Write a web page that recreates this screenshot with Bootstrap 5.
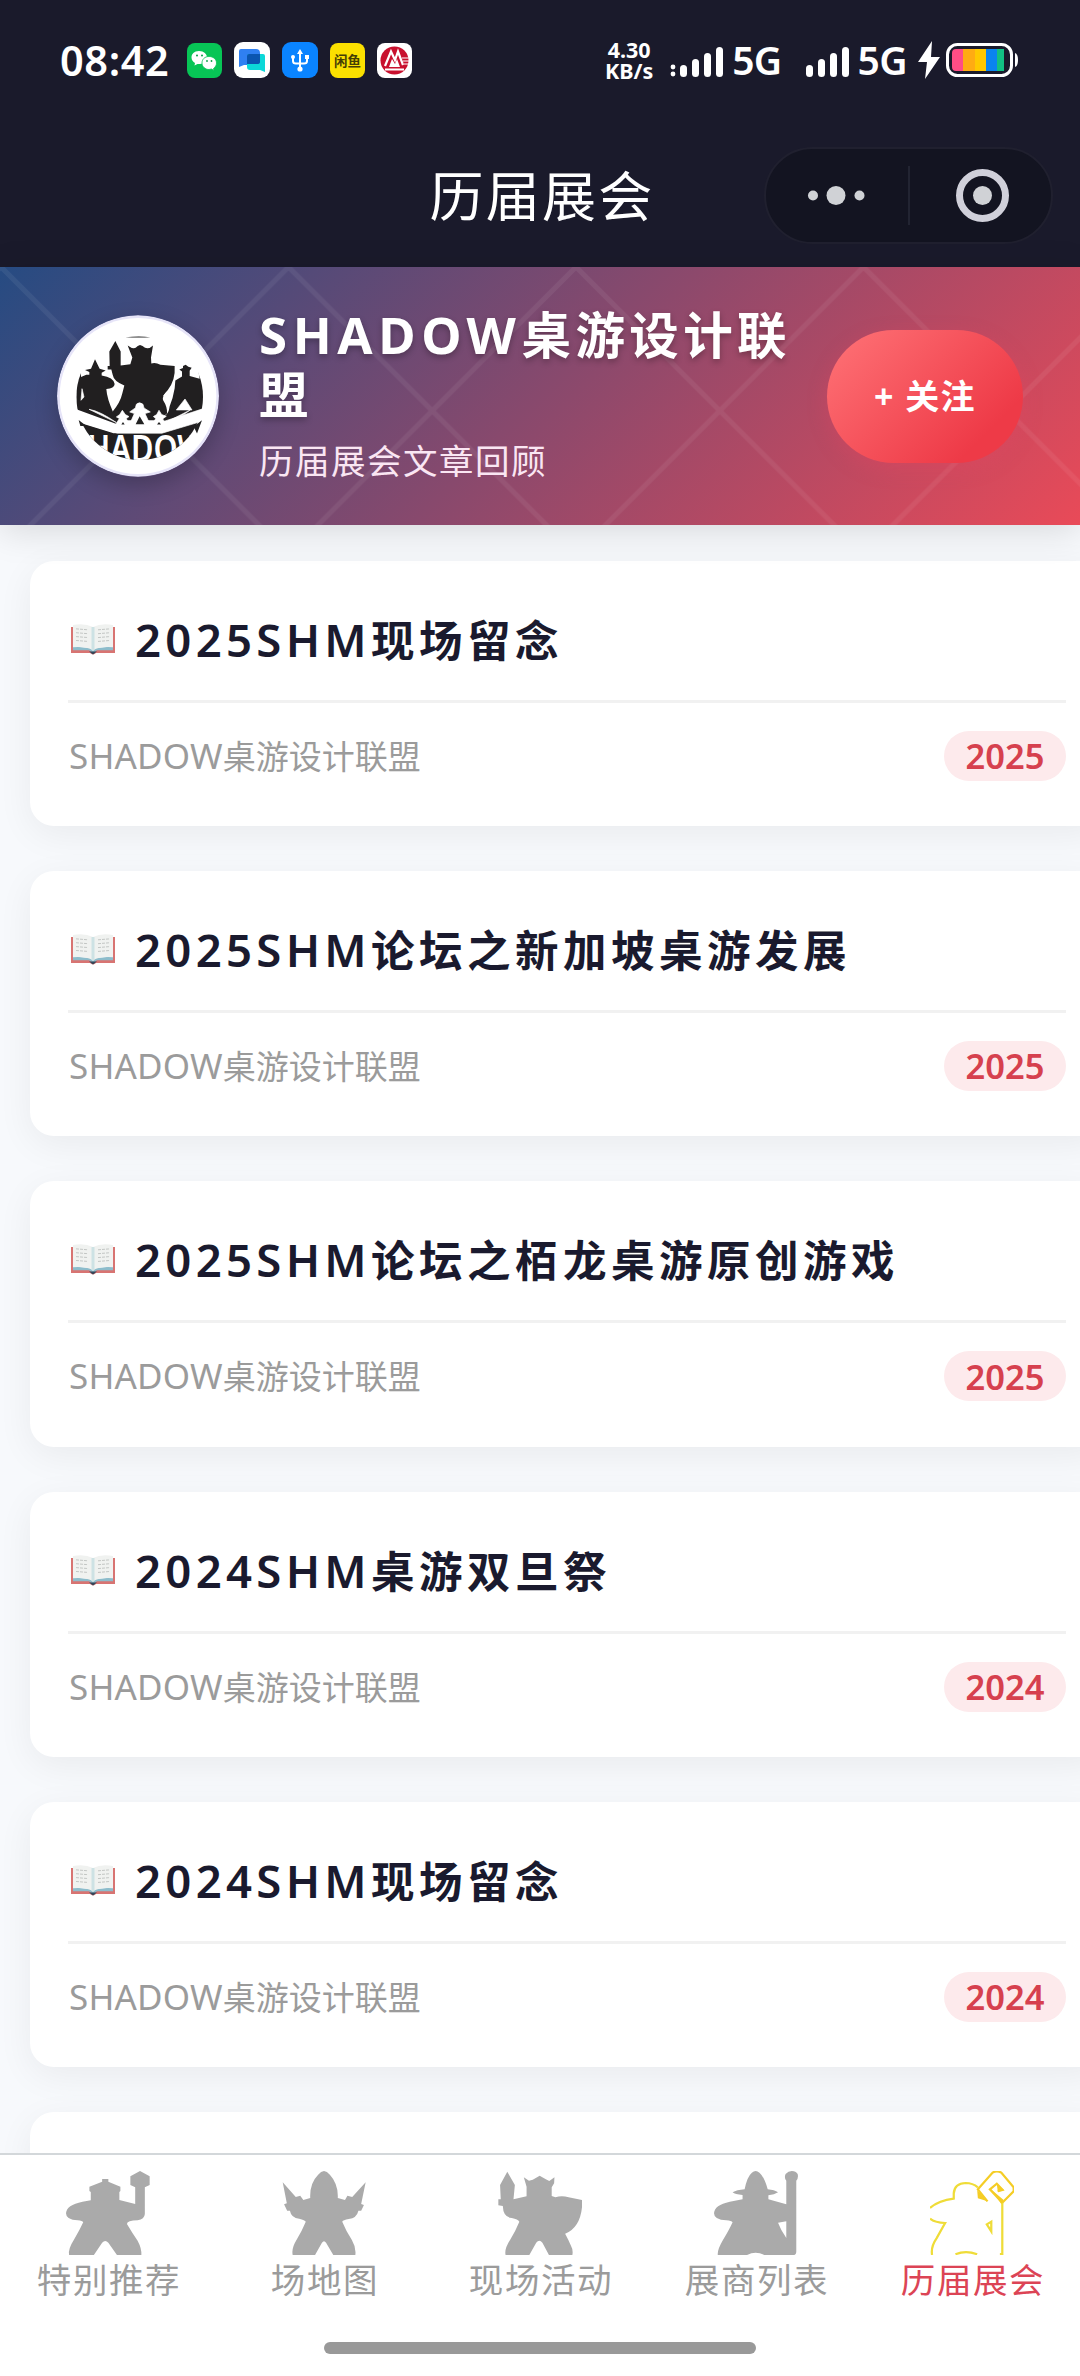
<!DOCTYPE html>
<html lang="zh-CN">
<head>
  <meta charset="UTF-8">
  <meta name="viewport" content="width=device-width, initial-scale=1">
  <title>历届展会</title>
  <link href="https://cdn.jsdelivr.net/npm/bootstrap@5.3.0/dist/css/bootstrap.min.css" rel="stylesheet">
  <style>
    body {
      width: 1080px;
      height: 2376px;
      margin: 0;
      overflow: hidden;
      background-color: #f7f9fc;
      font-family: "Noto Sans", "Noto Sans CJK SC", sans-serif;
      line-height: 1.2;
    }
    svg {
      display: block;
      flex: none;
    }

    /* status bar + title */
    .top-bar {
      height: 267px;
      background-color: #1a1a2b;
      color: #fff;
    }
    .status-bar {
      height: 120px;
      padding: 0 61px 0 60px;
    }
    .clock {
      width: 127px;
      font-size: 41.5px;
      font-weight: 600;
      letter-spacing: .6px;
      line-height: 50px;
    }
    .app-icons {
      gap: 12px;
    }
    .net-speed {
      width: 50px;
      font-size: 21.5px;
      font-weight: 700;
      line-height: 21px;
    }
    .net-type {
      font-size: 39px;
      font-weight: 600;
      line-height: 50px;
      letter-spacing: -.6px;
    }
    .title-bar {
      height: 147px;
      padding: 27px 27px 0;
      display: grid;
      grid-template-columns: 1fr 230px 1fr;
    }
    .title-bar h1 {
      margin: 0;
      padding: 4px 0 0 4px;
      font-size: 54px;
      font-weight: 400;
      line-height: 90px;
      letter-spacing: 2.2px;
      white-space: nowrap;
    }
    .capsule {
      width: 289px;
      height: 97px;
      border: 2px solid #20202f;
      border-radius: 49px;
      background-color: #131421;
    }

    /* account banner */
    .banner {
      height: 258px;
      padding: 0 57px;
      color: #fff;
      position: relative;
      z-index: 1;
      background: linear-gradient(135deg, #264b82 0%, #88496d 50%, #e94a58 100%);
      box-shadow: 0 6px 34px rgba(0, 0, 0, .13);
    }
    .banner-lines {
      position: absolute;
      inset: 0;
    }
    .avatar {
      border-radius: 50%;
      box-shadow: 0 8px 22px rgba(0, 0, 0, .22);
      position: relative;
    }
    .account {
      width: 605px;
      padding: 8px 0 0 40px;
      flex: none;
      position: relative;
    }
    .account h2 {
      margin: 0;
      font-size: 49.5px;
      font-weight: 700;
      line-height: 60px;
      letter-spacing: 4.4px;
      text-shadow: 0 3px 6px rgba(0, 0, 0, .28);
    }
    .account h2 span {
      font-size: 51px;
      letter-spacing: 5.6px;
    }
    .account p {
      margin: 0;
      font-size: 34.5px;
      line-height: 72px;
      letter-spacing: 1.5px;
      color: #fae6f3;
    }
    .btn-follow {
      width: 196px;
      height: 133px;
      margin-left: 3px;
      border-radius: 67px;
      background: linear-gradient(135deg, #ff7377 0%, #ee3a47 80%);
      box-shadow: 0 6px 20px rgba(233, 69, 96, .3);
      color: #fff;
      font-size: 34px;
      font-weight: 700;
      letter-spacing: 1.4px;
      position: relative;
    }

    /* articles */
    .articles {
      padding: 35.5px 0 0 29.5px;
      gap: 45px;
    }
    .article {
      width: 1075px;
      height: 265.4px;
      flex: none;
      padding: 0 38.5px;
      border-radius: 24px;
      background-color: #fff;
      box-shadow: 0 9px 36px rgba(0, 0, 0, .06);
    }
    .article-title {
      height: 142px;
      padding: 18px 0 0 3px;
      border-bottom: 3px solid #f1f1f1;
      color: #1a1a2e;
    }
    .article-title h3 {
      margin: 0 0 0 20px;
      font-size: 43.5px;
      font-weight: 700;
      letter-spacing: 4.5px;
      white-space: nowrap;
    }
    .article-title h3 span {
      font-size: 45.5px;
      font-weight: 650;
      letter-spacing: 4.3px;
    }
    .article-meta {
      height: 106px;
      padding-left: 1px;
      color: #9b9b9b;
      font-size: 33px;
    }
    .latin {
      font-size: 35px;
      letter-spacing: .2px;
    }
    .year {
      width: 122px;
      height: 50px;
      border-radius: 25px;
      background-color: #fdeaec;
      color: #d6404e;
      font-size: 34.5px;
      font-weight: 600;
    }

    /* tab bar */
    .tab-bar {
      height: 223px;
      border-top: 2px solid #d3d7da;
      background-color: #fff;
      color: #9b9b9b;
    }
    .tab-item {
      padding-top: 16px;
      font-size: 34.5px;
      letter-spacing: 1.6px;
      line-height: 48px;
      fill: #aaa;
    }
    .tab-item svg {
      margin-bottom: 1px;
    }
    .tab-item div {
      padding-left: 2px;
    }
    .tab-item.active {
      color: #dc4455;
    }
    .home-line {
      width: 432px;
      height: 12px;
      margin-top: 38px;
      border-radius: 6px;
      background-color: #999;
    }
  </style>
</head>
<body class="d-flex flex-column">

  <svg width="0" height="0" class="position-absolute">
    <symbol id="book" viewBox="0 0 44 32" preserveAspectRatio="none">
      <path d="M0 3H2V25H18L22 28L26 25H42V3H44V30H25Q22 33 19 30H0Z" fill="#d87472"/>
      <path d="M2 23L20 25L22 28L24 25L42 23V27H26L22 30L18 27H2Z" fill="#8dbccb"/>
      <path d="M18 28.500H26L22 31.500Z" fill="#33475a"/>
      <path d="M2 1Q14 -1 22 3Q30 -1 42 1V24Q29 23 22 27Q15 23 2 24Z" fill="#f0f2f0"/>
      <path d="M20.500 3H23.500V26L22 27L20.500 26Z" fill="#cde2e4"/>
      <path d="M5 5L17 6M5 9L17 10M5 13L17 14M5 17L17 18M27 6L39 5M27 10L39 9M27 14L39 13M27 18L39 17" stroke="#c2c5c3" stroke-width="1" stroke-dasharray="3 1"/>
    </symbol>
  </svg>

  <div class="top-bar">
    <div class="status-bar d-flex align-items-center justify-content-between">
      <div class="d-flex align-items-center">
        <div class="clock">08:42</div>
        <div class="app-icons d-flex align-items-center">
          <svg width="35" height="35" viewBox="0 0 35 35">
            <rect width="35" height="35" rx="8" fill="#07c556"/>
            <path d="M12 8C7 8 4.500 11 4.500 14.500C4.500 17 6 19 8 20L7.500 22.500L10.500 21H13C18 21 20 18 20 14.500C20 11 17 8 12 8Z" fill="#fff"/>
            <path d="M22 13.500C17.500 13.500 15 16.500 15 20C15 23.500 18 26.500 22 26.500L24.500 26L27 27.500L26.500 25.500C28.500 24 29.500 22 29.500 20C29.500 16.500 26.500 13.500 22 13.500Z" fill="#fff" stroke="#07c556" stroke-width=".8"/>
            <g fill="#07a045"><circle cx="10" cy="12.500" r="1"/><circle cx="15" cy="12.500" r="1"/><circle cx="20" cy="18" r=".9"/><circle cx="24.500" cy="18" r=".9"/></g>
          </svg>
          <svg width="36" height="36" viewBox="0 0 36 36">
            <rect width="36" height="36" rx="9" fill="#fff"/>
            <path d="M7 7H22Q26 7 26 11V23H10L5 25V9Q5 7 7 7Z" fill="#2f80f2"/>
            <path d="M15 12H29Q31 12 31 14V30L26 28H16Q13 28 13 25V15Q13 12 15 12Z" fill="#0cd8d8"/>
            <path d="M15 12H26V20Q26 22 23 22H13V14Q13 12 15 12Z" fill="#0a55b0"/>
          </svg>
          <svg width="36" height="36" viewBox="0 0 36 36">
            <rect width="36" height="36" rx="9" fill="#0a84ff"/>
            <path d="M18 11V28M11 15V19Q11 21.500 14 21.500H22Q25 21.500 25 19V15" fill="none" stroke="#fff" stroke-width="2"/>
            <path d="M18 7L21 12H15Z" fill="#fff"/>
            <circle cx="18" cy="27" r="2.600" fill="#fff"/><circle cx="11" cy="15" r="2" fill="#fff"/><rect x="23" y="13" width="4" height="4" fill="#fff"/>
          </svg>
          <svg width="35" height="35" viewBox="0 0 35 35">
            <rect width="35" height="35" rx="8" fill="#fbe000"/>
            <text x="17.500" y="22.500" font-size="13.500" font-weight="700" text-anchor="middle" fill="#453d05">闲鱼</text>
          </svg>
          <svg width="35" height="35" viewBox="0 0 35 35">
            <rect width="35" height="35" rx="8" fill="#fff"/>
            <circle cx="17.500" cy="17.500" r="14" fill="#c8102e"/>
            <path d="M8 23L14 8.500L18 17L21 8.500L26 22M8 26.500H27" fill="none" stroke="#fff" stroke-width="2.200"/>
            <path d="M12 24L15 16L18 21L20 16L23 24Z" fill="#fff"/>
            <path d="M25 15H33M26 18H33M27 21H33" stroke="#fff" stroke-width="1.200"/>
          </svg>
        </div>
      </div>
      <div class="d-flex align-items-center">
        <div class="net-speed text-center">4.30<br>KB/s</div>
        <svg width="54" height="36" viewBox="0 0 54 36" class="ms-3" fill="#fff">
          <circle cx="3" cy="25" r="2.400"/><circle cx="3" cy="32" r="2.400"/>
          <rect x="10" y="23" width="7" height="12" rx="3.500"/><rect x="22" y="17" width="7" height="18" rx="3.500"/><rect x="34" y="11" width="7" height="24" rx="3.500"/><rect x="46" y="5" width="7" height="30" rx="3.500"/>
        </svg>
        <div class="net-type ms-2 me-4">5G</div>
        <svg width="44" height="36" viewBox="0 0 44 36" fill="#fff">
          <rect x="0" y="23" width="7" height="12" rx="3.500"/><rect x="12" y="17" width="7" height="18" rx="3.500"/><rect x="24" y="11" width="7" height="24" rx="3.500"/><rect x="36" y="5" width="7" height="30" rx="3.500"/>
        </svg>
        <div class="net-type ms-2">5G</div>
        <svg width="104" height="38" viewBox="0 0 104 38" class="ms-2">
          <path d="M17 0L3 21H12L10 38L25 16H16Z" fill="#fff"/>
          <rect x="32.500" y="3.500" width="64" height="31" rx="10" fill="#1a1a2b" stroke="#fff" stroke-width="3"/>
          <path d="M41 8H48V30H41Q37 30 37 26V12Q37 8 41 8Z" fill="#ff4d85"/>
          <rect x="48" y="8" width="12" height="22" fill="#ffab12"/>
          <rect x="60" y="8" width="11" height="22" fill="#ffc800"/>
          <rect x="71" y="8" width="11" height="22" fill="#0a84f0"/>
          <rect x="82" y="8" width="7" height="22" fill="#12c083"/>
          <path d="M100 12Q103 13 103 19Q103 25 100 26Z" fill="#fff"/>
        </svg>
      </div>
    </div>
    <div class="title-bar">
      <div></div>
      <h1 class="text-center">历届展会</h1>
      <div class="d-flex justify-content-end">
        <svg class="capsule" viewBox="0 0 285 93">
          <g fill="#d0d2d6"><circle cx="47" cy="46.500" r="5"/><circle cx="70" cy="46.500" r="9.500"/><circle cx="93.500" cy="46.500" r="5"/><circle cx="216.500" cy="46.500" r="9.500"/></g>
          <path d="M143 17V76" stroke="#292a38" stroke-width="1.500"/>
          <circle cx="216.500" cy="46.500" r="23" fill="none" stroke="#d0d0da" stroke-width="7"/>
        </svg>
      </div>
    </div>
  </div>

  <div class="banner d-flex align-items-center flex-shrink-0">
    <svg class="banner-lines" width="1080" height="258">
      <defs>
        <pattern id="cross" x="1" y="0" width="287.500" height="287.500" patternUnits="userSpaceOnUse">
          <path d="M0 0L287.500 287.500M287.500 0L0 287.500" stroke="#fff" stroke-opacity=".06" stroke-width="5"/>
        </pattern>
      </defs>
      <rect width="1080" height="258" fill="url(#cross)"/>
    </svg>
    <svg class="avatar" width="162" height="162" viewBox="20 28 486 488" preserveAspectRatio="none">
      <defs>
        <clipPath id="disc"><circle cx="268" cy="275" r="190"/></clipPath>
      </defs>
      <circle cx="263" cy="272" r="243" fill="#e6e4f8"/>
      <circle cx="263" cy="272" r="235" fill="#fff"/>
      <path d="M225 95Q268 90 300 95Q268 97 225 95Z" fill="#222"/>
      <g clip-path="url(#disc)" fill="#211f20">
        <path d="M78 205L92 195V215L108 208H117V200L104 194L122 190L134 161L148 190L166 195L154 202V210Q190 215 193 236Q192 249 168 251Q170 280 188 320L215 335V362L78 312Z"/>
        <path d="M183 192H172V182H178L177 138L195 106L211 138V180L240 176L246 156L232 120Q248 132 256 127Q262 120 269 118Q277 120 284 127Q296 132 308 120L302 156L303 174Q316 170 330 178L373 182Q376 225 352 255Q335 272 338 284Q352 306 350 325L325 345H210L186 320Q210 292 216 264L222 240Q190 228 187 208Z"/>
        <path d="M375 225L395 213V198L387 192L398 188V182L406 178L414 184L424 187L418 196V212L448 220L444 196L462 208V310L320 360L345 330Q355 325 358 303Q368 280 373 249Z"/>
        <path d="M75 344L100 356L190 384L268 378L370 370L465 342V475H75Z"/>
      </g>
      <g fill="#fff" stroke="#fff" stroke-width="2">
        <path d="M95 250L101 275L92 285ZM362 253L340 270Q350 293 352 306ZM404 281L378 314H425ZM182 252L192 294L203 268Z"/>
        <path d="M78 317L210 367L268 372L462 309V346L335 384H200L78 347Z"/>
        <path d="M232 370L252 325L238 320L255 308L258 297Q267 288 278 297L281 308L300 320L284 325L306 372Z"/>
        <path d="M193 362L207 340L198 335L208 328L216 315L225 328L236 334L228 340L240 365ZM302 365L316 340L309 334L319 328L326 315L334 328L348 333L337 341L352 362Z"/>
        <path d="M116 312Q150 318 198 352ZM420 314L345 352L400 328Z"/>
      </g>
      <path d="M256 357L268 333L282 357ZM213 358L218 350L223 358ZM320 358L326 350L332 358Z" fill="#222"/>
      <path d="M85 344L108 362H90ZM455 345L430 364L440 385Z" fill="#222"/>
      <text x="264" y="470" font-size="116" font-weight="600" text-anchor="middle" textLength="410" lengthAdjust="spacingAndGlyphs" fill="#fff" clip-path="url(#disc)">SHADOW</text>
    </svg>
    <div class="account">
      <h2><span>SHADOW</span>桌游设计联盟</h2>
      <p>历届展会文章回顾</p>
    </div>
    <button class="btn-follow border-0 p-0">+ 关注</button>
  </div>

  <div class="articles d-flex flex-column flex-grow-1 overflow-hidden">
    <div class="article">
      <div class="article-title d-flex align-items-center">
        <svg width="44" height="31"><use href="#book"/></svg>
        <h3><span>2025SHM</span>现场留念</h3>
      </div>
      <div class="article-meta d-flex align-items-center justify-content-between">
        <div><span class="latin">SHADOW</span>桌游设计联盟</div>
        <div class="year d-flex align-items-center justify-content-center">2025</div>
      </div>
    </div>
    <div class="article">
      <div class="article-title d-flex align-items-center">
        <svg width="44" height="31"><use href="#book"/></svg>
        <h3><span>2025SHM</span>论坛之新加坡桌游发展</h3>
      </div>
      <div class="article-meta d-flex align-items-center justify-content-between">
        <div><span class="latin">SHADOW</span>桌游设计联盟</div>
        <div class="year d-flex align-items-center justify-content-center">2025</div>
      </div>
    </div>
    <div class="article">
      <div class="article-title d-flex align-items-center">
        <svg width="44" height="31"><use href="#book"/></svg>
        <h3><span>2025SHM</span>论坛之栢龙桌游原创游戏</h3>
      </div>
      <div class="article-meta d-flex align-items-center justify-content-between">
        <div><span class="latin">SHADOW</span>桌游设计联盟</div>
        <div class="year d-flex align-items-center justify-content-center">2025</div>
      </div>
    </div>
    <div class="article">
      <div class="article-title d-flex align-items-center">
        <svg width="44" height="31"><use href="#book"/></svg>
        <h3><span>2024SHM</span>桌游双旦祭</h3>
      </div>
      <div class="article-meta d-flex align-items-center justify-content-between">
        <div><span class="latin">SHADOW</span>桌游设计联盟</div>
        <div class="year d-flex align-items-center justify-content-center">2024</div>
      </div>
    </div>
    <div class="article">
      <div class="article-title d-flex align-items-center">
        <svg width="44" height="31"><use href="#book"/></svg>
        <h3><span>2024SHM</span>现场留念</h3>
      </div>
      <div class="article-meta d-flex align-items-center justify-content-between">
        <div><span class="latin">SHADOW</span>桌游设计联盟</div>
        <div class="year d-flex align-items-center justify-content-center">2024</div>
      </div>
    </div>
    <div class="article"></div>
  </div>

  <div class="tab-bar flex-shrink-0">
    <div class="row row-cols-5 g-0">
      <div class="tab-item col d-flex flex-column align-items-center">
        <svg width="84" height="84" viewBox="192 243 244 252" preserveAspectRatio="none">
          <path d="M201 495Q197 478 215 449Q232 420 242 397Q240 392 226 391Q192 390 192 370Q193 345 240 335L264 331V306L260 303V290L297 275V267H315V275L350 290V303L347 306V330L393 342V292L379 285V259L407 243L435 259V285L421 292V372Q420 388 400 391Q370 391 369 402Q385 430 400 452Q412 475 411 495H340L315 458Q306 448 297 458L273 495Z"/>
        </svg>
        <div>特别推荐</div>
      </div>
      <div class="tab-item col d-flex flex-column align-items-center">
        <svg width="84" height="84" viewBox="818 243 244 252" preserveAspectRatio="none">
          <path d="M849 495Q845 475 860 450Q875 425 887 395Q885 390 868 386Q845 384 841 362H833L824 343L832 340L820 277L858 321L871 317L880 330L900 324Q898 280 923 254Q940 232 957 254Q982 282 980 324L1001 330L1008 317L1022 321L1061 277L1048 342L1056 345L1048 362H1040Q1035 384 1012 387Q995 390 993 395Q1005 425 1021 450Q1034 473 1031 495H967L946 458Q940 449 934 458L914 495Z"/>
        </svg>
        <div>场地图</div>
      </div>
      <div class="tab-item col d-flex flex-column align-items-center">
        <svg width="84" height="84" viewBox="1445 243 244 252" preserveAspectRatio="none">
          <path d="M1467 495Q1463 477 1480 450Q1495 425 1507 395Q1503 388 1485 384Q1460 382 1459 348L1446 346V328H1453L1451 285L1472 245L1494 285L1490 328L1528 319V290L1520 262L1535 272L1546 269L1566 257L1584 268L1594 273L1609 262L1608 280L1601 292V318L1612 322Q1630 315 1650 322L1690 330Q1690 410 1640 431Q1650 450 1656 465Q1664 480 1661 495H1593L1574 458Q1565 447 1556 458L1536 495Z"/>
        </svg>
        <div>现场活动</div>
      </div>
      <div class="tab-item col d-flex flex-column align-items-center">
        <svg width="84" height="84" viewBox="504 243 244 252" preserveAspectRatio="none">
          <path fill-rule="evenodd" d="M515 495Q513 480 530 450Q548 420 558 397Q555 392 540 391Q504 390 504 370Q505 345 550 335L587 328V315Q565 313 558 307Q570 300 593 298Q600 260 614 248Q625 238 636 248Q650 260 660 298Q680 300 690 307Q680 314 662 316V328L714 343V272Q707 264 712 252Q720 243 730 243Q742 243 747 252Q750 264 743 272V485Q743 495 733 495H650Q625 482 600 495ZM714 394L690 398Q698 420 714 444Z"/>
        </svg>
        <div>展商列表</div>
      </div>
      <div class="tab-item active col d-flex flex-column align-items-center">
        <svg width="84" height="84" viewBox="1131 243 244 252" preserveAspectRatio="none">
          <g fill="none" stroke="#efdc38" stroke-width="6.500">
            <path d="M1131 354Q1155 332 1200 326V310Q1202 280 1235 279Q1255 279 1270 292M1131 386Q1145 398 1175 399L1168 412L1150 445Q1133 470 1137 495"/>
            <path d="M1298 334L1270 298L1313 248Q1325 240 1338 248L1374 292V304L1341 338L1305 298L1325 281L1342 300L1328 304" stroke="#f5cd25"/>
            <path d="M1341 338V492H1334M1296 403L1309 395V424ZM1205 493Q1235 480 1268 493"/>
          </g>
          <path d="M1268 300L1298 334L1270 325ZM1308 298L1345 330L1338 342ZM1325 281L1346 300L1328 306Z" fill="#f5cd25"/>
        </svg>
        <div>历届展会</div>
      </div>
    </div>
    <div class="home-line mx-auto"></div>
  </div>

  <script src="https://cdn.jsdelivr.net/npm/bootstrap@5.3.0/dist/js/bootstrap.bundle.min.js"></script>
</body>
</html>
